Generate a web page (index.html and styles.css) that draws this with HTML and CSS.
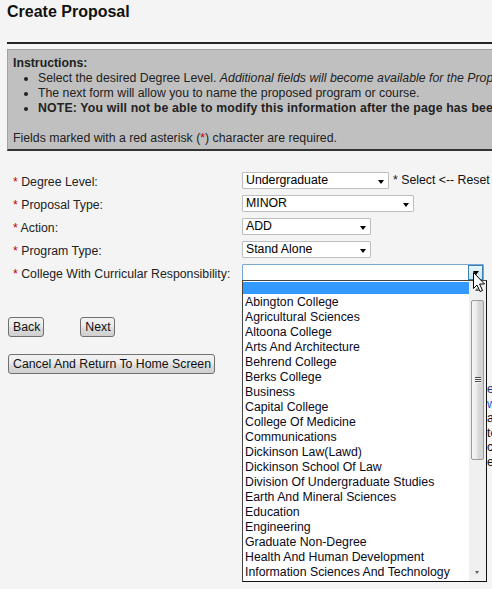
FILE: index.html
```html
<!DOCTYPE html>
<html lang="en">
<head>
<meta charset="utf-8">
<title>Create Proposal</title>
<link rel="stylesheet" href="styles.css">
</head>
<body>
<div class="page">
  <h1 class="title">Create Proposal</h1>
  <div class="rule"></div>
  <div class="instructions">
    <div class="instr-head">Instructions:</div>
    <ul class="instr-list">
      <li>Select the desired Degree Level. <em>Additional fields will become available for the Proposal Type, Action and Program Type.</em></li>
      <li>The next form will allow you to name the proposed program or course.</li>
      <li><strong>NOTE: You will not be able to modify this information after the page has been submitted.</strong></li>
    </ul>
    <p class="req">Fields marked with a red asterisk (<span class="ast">*</span>) character are required.</p>
  </div>

  <div class="form">
    <label class="lbl"><span class="ast">*</span> Degree Level:</label>
    <div class="field">
      <span class="sel w-degree"><select><option>Undergraduate</option></select></span>
      <span class="hint">* Select &lt;-- Reset --&gt;</span>
    </div>

    <label class="lbl"><span class="ast">*</span> Proposal Type:</label>
    <div class="field"><span class="sel w-type"><select><option>MINOR</option></select></span></div>

    <label class="lbl"><span class="ast">*</span> Action:</label>
    <div class="field"><span class="sel w-short"><select><option>ADD</option></select></span></div>

    <label class="lbl"><span class="ast">*</span> Program Type:</label>
    <div class="field"><span class="sel w-short"><select><option>Stand Alone</option></select></span></div>

    <label class="lbl"><span class="ast">*</span> College With Curricular Responsibility:</label>
    <div class="field"><span class="sel w-college focus"><select><option></option></select></span></div>
  </div>

  <div class="nav-buttons">
    <button class="btn">Back</button>
    <button class="btn">Next</button>
  </div>
  <div class="cancel-row">
    <button class="btn btn-cancel">Cancel And Return To Home Screen</button>
  </div>
</div>

<div class="behind">
  <div class="b-navy">each</div>
  <div class="b-blue">www</div>
  <div>aid</div>
  <div>text</div>
  <div>course</div>
  <div>est</div>
</div>

<div class="dropdown">
  <div class="options">
    <div class="opt blank"></div>
    <div class="opt">Abington College</div>
    <div class="opt">Agricultural Sciences</div>
    <div class="opt">Altoona College</div>
    <div class="opt">Arts And Architecture</div>
    <div class="opt">Behrend College</div>
    <div class="opt">Berks College</div>
    <div class="opt">Business</div>
    <div class="opt">Capital College</div>
    <div class="opt">College Of Medicine</div>
    <div class="opt">Communications</div>
    <div class="opt">Dickinson Law(Lawd)</div>
    <div class="opt">Dickinson School Of Law</div>
    <div class="opt">Division Of Undergraduate Studies</div>
    <div class="opt">Earth And Mineral Sciences</div>
    <div class="opt">Education</div>
    <div class="opt">Engineering</div>
    <div class="opt">Graduate Non-Degree</div>
    <div class="opt">Health And Human Development</div>
    <div class="opt">Information Sciences And Technology</div>
  </div>
  <div class="scrollbar">
    <div class="sb-btn sb-up"></div>
    <div class="sb-thumb"><span class="grip"></span></div>
    <div class="sb-track"></div>
    <div class="sb-btn sb-down"></div>
  </div>
</div>

<svg class="cursor" width="14" height="22" viewBox="0 0 14 22" xmlns="http://www.w3.org/2000/svg">
  <path d="M1.5 1.5 L1.5 17.5 L5 14 L8 20.5 L10.5 19.5 L7.6 13 L12.5 13 Z" fill="#fff" stroke="#000" stroke-width="1" stroke-linejoin="round"/>
</svg>
</body>
</html>
```

FILE: styles.css
```css
html, body {
  margin: 0;
  padding: 0;
  overflow: hidden;
  background: #f4f4f4;
}

body {
  font-family: "Liberation Sans", Arial, sans-serif;
  font-size: 12.3px;
  line-height: 15px;
  color: #222;
}

.page {
  width: 1000px;
  padding: 3px 7px 0 7px;
}

.title {
  margin: 0;
  font-size: 16px;
  line-height: 18px;
  font-weight: bold;
  color: #111;
}

.rule {
  margin-top: 21px;
  border-top: 2px solid #222;
}

.instructions {
  margin-top: 5px;
  background: #c0c0c0;
  border: 1px solid #a0a0a0;
  border-bottom: 2px solid #333;
  padding: 6px 5px 3px 5px;
  white-space: nowrap;
}

.instr-head {
  font-weight: bold;
}

.instr-list {
  margin: 0 0 15px 0;
  padding-left: 25px;
}

.instr-list strong {
  letter-spacing: 0.15px;
}

.req {
  margin: 0;
}

.ast {
  color: #c00000;
}

.form {
  margin-top: 21px;
  display: grid;
  grid-template-columns: 229px 1fr;
  grid-auto-rows: 17px;
  row-gap: 6px;
  padding-left: 6px;
}

.lbl {
  padding-top: 3px;
  line-height: 14px;
  white-space: nowrap;
}

.field {
  display: flex;
  align-items: center;
  white-space: nowrap;
}

.sel {
  position: relative;
  display: inline-block;
  height: 17px;
}

.sel select {
  -webkit-appearance: none;
  appearance: none;
  box-sizing: border-box;
  width: 100%;
  height: 17px;
  margin: 0;
  padding: 0 0 0 3px;
  border: 1px solid #bdbdbd;
  border-radius: 1px;
  background: #fff;
  font-family: "Liberation Sans", Arial, sans-serif;
  font-size: 12.3px;
  line-height: 15px;
  color: #000;
}

.sel::after {
  content: "";
  position: absolute;
  right: 5px;
  top: 8px;
  border-left: 3px solid transparent;
  border-right: 3px solid transparent;
  border-top: 4px solid #000;
}

.w-degree { width: 147px; }
.w-type { width: 172px; }
.w-short { width: 129px; }
.w-college { width: 242px; }

.sel.focus select {
  border-color: #7aa6d2;
}

.sel.focus::before {
  content: "";
  position: absolute;
  right: 1px;
  top: 1px;
  width: 13px;
  height: 13px;
  border: 1px solid #3c7fb1;
  background: linear-gradient(#eaf6fd, #c4e5f6);
}

.sel.focus::after {
  right: 5px;
  top: 7px;
}

.hint {
  margin-left: 4px;
  color: #111;
}

.nav-buttons {
  margin-top: 36px;
  display: flex;
  gap: 36px;
  padding-left: 1px;
}

.cancel-row {
  margin-top: 17px;
  padding-left: 1px;
}

.btn {
  box-sizing: border-box;
  height: 20px;
  margin: 0;
  padding: 0 3px 0 4px;
  border: 1px solid #707070;
  border-radius: 3px;
  background: linear-gradient(#f2f2f2 0%, #ebebeb 45%, #dddddd 55%, #cfcfcf 100%);
  font-family: "Liberation Sans", Arial, sans-serif;
  font-size: 12.3px;
  line-height: 16px;
  color: #111;
}

/* text of the page column that lies under the open list */
.behind {
  position: absolute;
  left: 487px;
  top: 382px;
  line-height: 14.5px;
  color: #111;
  white-space: nowrap;
}

.b-navy { color: #1f3870; }
.b-blue { color: #2a5bc8; }

/* open drop-down list of the focused select */
.dropdown {
  position: absolute;
  left: 242px;
  top: 280px;
  box-sizing: border-box;
  width: 245px;
  height: 302px;
  border: 1px solid #444;
  border-bottom-color: #111;
  border-right-color: #111;
  background: #fff;
  display: flex;
  overflow: hidden;
}

.options {
  width: 226px;
  padding-top: 1px;
  color: #0a0a1a;
  white-space: nowrap;
  overflow: hidden;
}

.opt {
  height: 15px;
  padding-left: 2px;
}

.opt.blank {
  height: 12px;
  margin-bottom: 1px;
  background: #3399ff;
}

.scrollbar {
  width: 17px;
  height: 100%;
  background: #f0f0f0;
  display: flex;
  flex-direction: column;
  align-items: center;
}

.sb-btn {
  position: relative;
  width: 17px;
  height: 17px;
  flex: none;
}

.sb-up::after {
  content: "";
  position: absolute;
  left: 6px;
  top: 7px;
  border-left: 2.5px solid transparent;
  border-right: 2.5px solid transparent;
  border-bottom: 3px solid #606060;
}

.sb-down::after {
  content: "";
  position: absolute;
  left: 6px;
  top: 7px;
  border-left: 2.5px solid transparent;
  border-right: 2.5px solid transparent;
  border-top: 3px solid #606060;
}

.sb-thumb {
  box-sizing: border-box;
  margin-top: 2px;
  width: 13px;
  height: 160px;
  flex: none;
  border: 1px solid #9b9b9b;
  border-radius: 2px;
  background: linear-gradient(to right, #f6f6f6 0%, #e9e9e9 45%, #d9d9d9 55%, #d2d2d2 100%);
  display: flex;
  align-items: center;
  justify-content: center;
}

.grip {
  width: 6px;
  height: 6px;
  background: repeating-linear-gradient(#4a4a4a 0, #4a4a4a 1px, #f4f4f4 1px, #f4f4f4 2px);
}

.sb-track {
  flex: 1;
}

.cursor {
  position: absolute;
  left: 472px;
  top: 271px;
}
```
